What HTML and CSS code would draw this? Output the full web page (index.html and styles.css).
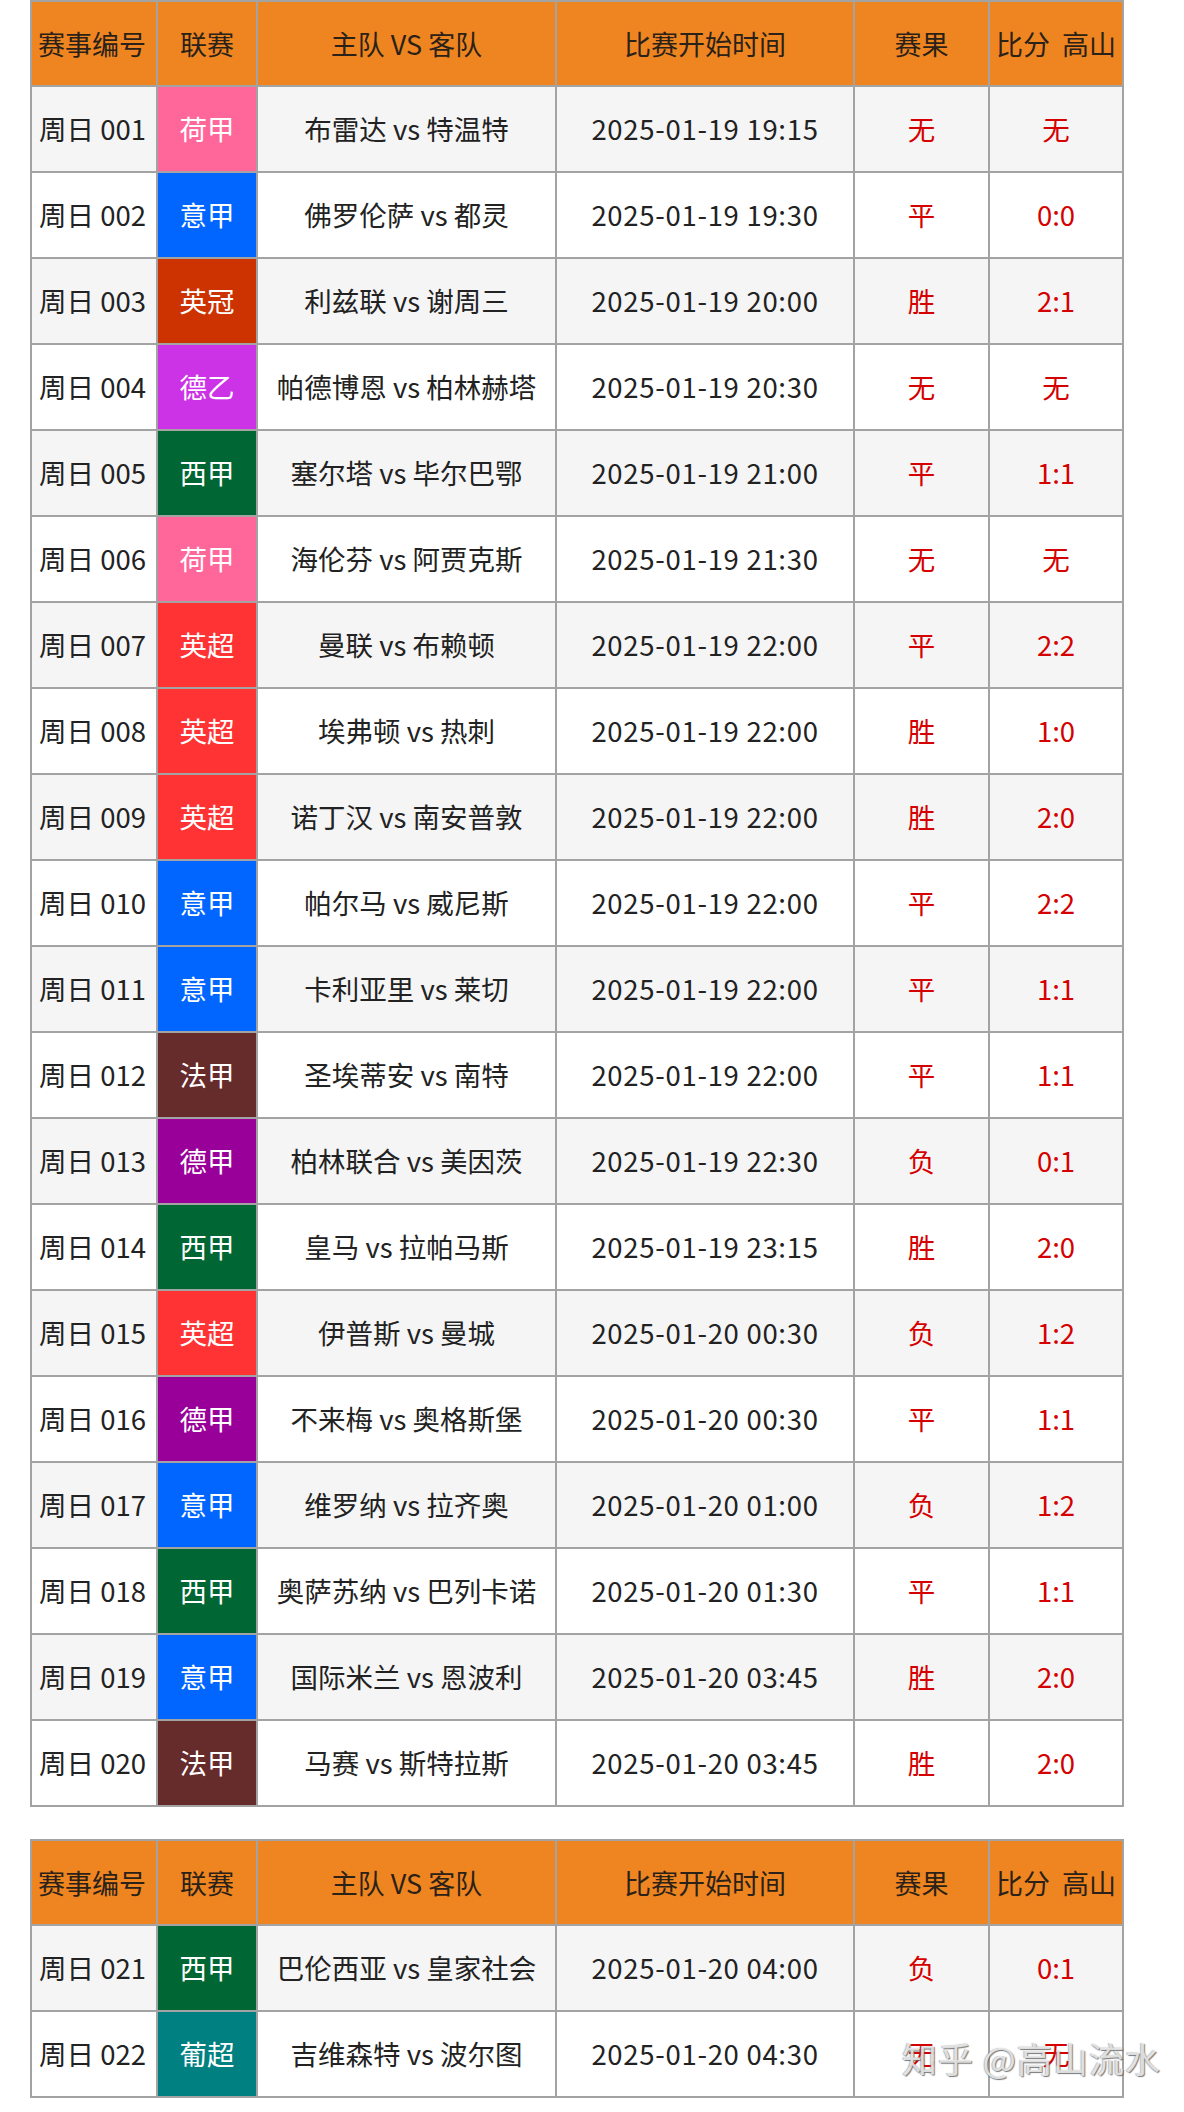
FILE: index.html
```html
<!DOCTYPE html>
<html lang="zh-CN">
<head>
<meta charset="utf-8">
<title>赛果</title>
<link rel="stylesheet" href="styles.css">
</head>
<body>
<div class="page">
  <table class="matches">
    <colgroup>
      <col class="c-no"><col class="c-lg"><col class="c-team"><col class="c-time"><col class="c-res"><col class="c-score">
    </colgroup>
    <thead>
      <tr><th class="th-no">赛事编号</th><th>联赛</th><th>主队 VS 客队</th><th>比赛开始时间</th><th>赛果</th><th class="score">比分&nbsp; 高山</th></tr>
    </thead>
    <tbody>
      <tr><td class="no">周日 001</td><td class="lg hj">荷甲</td><td>布雷达 vs 特温特</td><td class="time">2025-01-19 19:15</td><td class="red">无</td><td class="red score">无</td></tr>
      <tr><td class="no">周日 002</td><td class="lg yj">意甲</td><td>佛罗伦萨 vs 都灵</td><td class="time">2025-01-19 19:30</td><td class="red">平</td><td class="red score">0:0</td></tr>
      <tr><td class="no">周日 003</td><td class="lg yg">英冠</td><td>利兹联 vs 谢周三</td><td class="time">2025-01-19 20:00</td><td class="red">胜</td><td class="red score">2:1</td></tr>
      <tr><td class="no">周日 004</td><td class="lg dy">德乙</td><td>帕德博恩 vs 柏林赫塔</td><td class="time">2025-01-19 20:30</td><td class="red">无</td><td class="red score">无</td></tr>
      <tr><td class="no">周日 005</td><td class="lg xj">西甲</td><td>塞尔塔 vs 毕尔巴鄂</td><td class="time">2025-01-19 21:00</td><td class="red">平</td><td class="red score">1:1</td></tr>
      <tr><td class="no">周日 006</td><td class="lg hj">荷甲</td><td>海伦芬 vs 阿贾克斯</td><td class="time">2025-01-19 21:30</td><td class="red">无</td><td class="red score">无</td></tr>
      <tr><td class="no">周日 007</td><td class="lg yc">英超</td><td>曼联 vs 布赖顿</td><td class="time">2025-01-19 22:00</td><td class="red">平</td><td class="red score">2:2</td></tr>
      <tr><td class="no">周日 008</td><td class="lg yc">英超</td><td>埃弗顿 vs 热刺</td><td class="time">2025-01-19 22:00</td><td class="red">胜</td><td class="red score">1:0</td></tr>
      <tr><td class="no">周日 009</td><td class="lg yc">英超</td><td>诺丁汉 vs 南安普敦</td><td class="time">2025-01-19 22:00</td><td class="red">胜</td><td class="red score">2:0</td></tr>
      <tr><td class="no">周日 010</td><td class="lg yj">意甲</td><td>帕尔马 vs 威尼斯</td><td class="time">2025-01-19 22:00</td><td class="red">平</td><td class="red score">2:2</td></tr>
      <tr><td class="no">周日 011</td><td class="lg yj">意甲</td><td>卡利亚里 vs 莱切</td><td class="time">2025-01-19 22:00</td><td class="red">平</td><td class="red score">1:1</td></tr>
      <tr><td class="no">周日 012</td><td class="lg fj">法甲</td><td>圣埃蒂安 vs 南特</td><td class="time">2025-01-19 22:00</td><td class="red">平</td><td class="red score">1:1</td></tr>
      <tr><td class="no">周日 013</td><td class="lg dj">德甲</td><td>柏林联合 vs 美因茨</td><td class="time">2025-01-19 22:30</td><td class="red">负</td><td class="red score">0:1</td></tr>
      <tr><td class="no">周日 014</td><td class="lg xj">西甲</td><td>皇马 vs 拉帕马斯</td><td class="time">2025-01-19 23:15</td><td class="red">胜</td><td class="red score">2:0</td></tr>
      <tr><td class="no">周日 015</td><td class="lg yc">英超</td><td>伊普斯 vs 曼城</td><td class="time">2025-01-20 00:30</td><td class="red">负</td><td class="red score">1:2</td></tr>
      <tr><td class="no">周日 016</td><td class="lg dj">德甲</td><td>不来梅 vs 奥格斯堡</td><td class="time">2025-01-20 00:30</td><td class="red">平</td><td class="red score">1:1</td></tr>
      <tr><td class="no">周日 017</td><td class="lg yj">意甲</td><td>维罗纳 vs 拉齐奥</td><td class="time">2025-01-20 01:00</td><td class="red">负</td><td class="red score">1:2</td></tr>
      <tr><td class="no">周日 018</td><td class="lg xj">西甲</td><td>奥萨苏纳 vs 巴列卡诺</td><td class="time">2025-01-20 01:30</td><td class="red">平</td><td class="red score">1:1</td></tr>
      <tr><td class="no">周日 019</td><td class="lg yj">意甲</td><td>国际米兰 vs 恩波利</td><td class="time">2025-01-20 03:45</td><td class="red">胜</td><td class="red score">2:0</td></tr>
      <tr><td class="no">周日 020</td><td class="lg fj">法甲</td><td>马赛 vs 斯特拉斯</td><td class="time">2025-01-20 03:45</td><td class="red">胜</td><td class="red score">2:0</td></tr>
    </tbody>
  </table>

  <table class="matches second">
    <colgroup>
      <col class="c-no"><col class="c-lg"><col class="c-team"><col class="c-time"><col class="c-res"><col class="c-score">
    </colgroup>
    <thead>
      <tr><th class="th-no">赛事编号</th><th>联赛</th><th>主队 VS 客队</th><th>比赛开始时间</th><th>赛果</th><th class="score">比分&nbsp; 高山</th></tr>
    </thead>
    <tbody>
      <tr><td class="no">周日 021</td><td class="lg xj">西甲</td><td>巴伦西亚 vs 皇家社会</td><td class="time">2025-01-20 04:00</td><td class="red">负</td><td class="red score">0:1</td></tr>
      <tr><td class="no">周日 022</td><td class="lg pc">葡超</td><td>吉维森特 vs 波尔图</td><td class="time">2025-01-20 04:30</td><td class="red">无</td><td class="red score">无</td></tr>
    </tbody>
  </table>

  <div class="watermark">知乎 @高山流水</div>
</div>
</body>
</html>
```

FILE: styles.css
```css
html, body {
  margin: 0;
  padding: 0;
  background: #ffffff;
}

.page {
  position: relative;
  width: 1184px;
  height: 2112px;
  overflow: hidden;
  padding: 0 0 0 30px;
  box-sizing: border-box;
  font-family: "Noto Sans CJK SC", "Noto Sans", sans-serif;
  color: #222222;
}

.matches {
  border-collapse: collapse;
  table-layout: fixed;
  width: 1092px;
  font-size: 27.5px;
}

.matches.second {
  margin-top: 32px;
}

.c-no { width: 126px; }
.c-lg { width: 100px; }
.c-team { width: 299px; }
.c-time { width: 298px; }
.c-res { width: 135px; }
.c-score { width: 134px; }

.matches th,
.matches td {
  border: 2px solid #a3a3a3;
  height: 84px;
  padding: 0;
  text-align: center;
  vertical-align: middle;
  white-space: nowrap;
  overflow: hidden;
  line-height: 1;
}

.matches th {
  background: #ef8521;
  color: #2a2118;
  font-weight: normal;
  font-size: 27px;
  height: 83px;
}

.matches th.th-no,
.matches td.no {
  text-align: left;
  padding-left: 7px;
}

.matches th.th-no {
  padding-left: 6px;
}

.matches td.time {
  letter-spacing: 0.7px;
}

.matches th.score,
.matches td.score {
  border-left: 1px solid #b0b0b0;
}

.matches tbody tr:nth-child(odd) td {
  background: #f5f5f5;
}

.matches tbody tr:nth-child(even) td {
  background: #ffffff;
}

.matches td.red {
  color: #d50000;
}

.matches td.lg {
  color: #ffffff;
}

.matches tbody tr td.hj { background: #ff6699; }
.matches tbody tr td.yj { background: #0066ff; }
.matches tbody tr td.yg { background: #cc3300; }
.matches tbody tr td.dy { background: #cc33e6; }
.matches tbody tr td.xj { background: #006633; }
.matches tbody tr td.yc { background: #ff3333; }
.matches tbody tr td.fj { background: #662b2b; }
.matches tbody tr td.dj { background: #990099; }
.matches tbody tr td.pc { background: #008080; }

.watermark {
  position: absolute;
  left: 902px;
  top: 2040px;
  font-size: 35px;
  line-height: 1;
  letter-spacing: 1px;
  color: rgba(240, 240, 240, 0.85);
  text-shadow: 1px 1px 1px rgba(90, 90, 90, 0.8), -1px 0 1px rgba(120, 120, 120, 0.5);
  white-space: nowrap;
}
```
